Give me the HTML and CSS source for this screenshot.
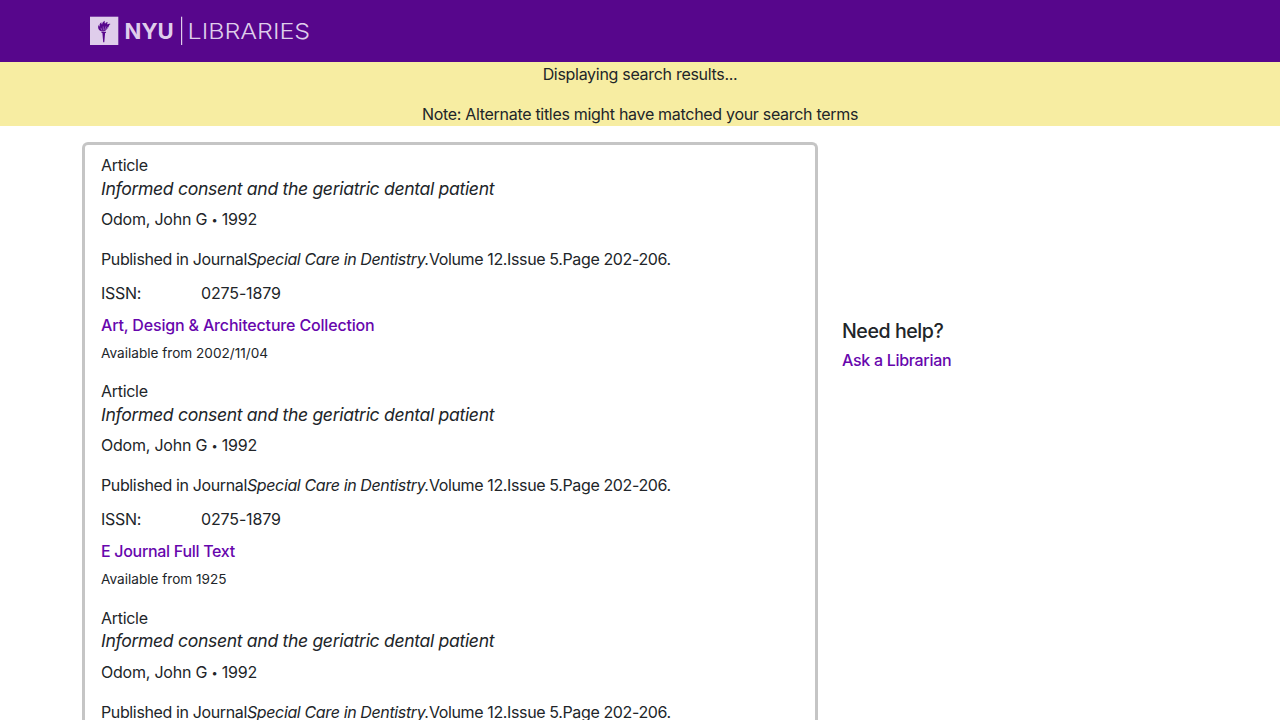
FILE: index.html
```html
<!DOCTYPE html>
<html lang="en">
<head>
<meta charset="utf-8">
<title>NYU Libraries</title>
<link rel="stylesheet" href="styles.css">
</head>
<body>
<header class="header">
  <svg class="logo" width="220" height="30" viewBox="0 0 220 30" role="img" aria-label="NYU Libraries">
    <rect x="0" y="0.7" width="28.3" height="28.3" fill="#dfcdeb"/>
    <path fill="#57068c" d="M11.500 15.800h4.400v1.300h-.8l-.8 9.100h-1.100l-.8-9.100h-.9zM11.200 15.300C8.400 14.200 7.400 11.700 8.700 8.800c.1 1 .4 1.500 1 1.700-.5-2 .2-3.200 1.700-4.200-.1 1.300.2 1.800.7 2.300.1-1.800.9-2.900 2.800-3.800-.5 1.600-.2 2.300.2 3 .5-1 1.400-1.600 2.700-1.700-.7 1-.6 1.600-.4 2.300.9-.6 2-.7 3.100-.3-1.200.5-1.300 1.500-1.900 2.600-1.100 2.200-2.600 3.900-4.900 4.600z"/>
    <path fill="none" stroke="#dfcdeb" stroke-width=".4" d="M12 14.600 10.800 11.800M13.400 14.400l-.2-4M14.700 14.200l1.300-4M16 13.800l2-3"/>
    <text class="logo-bold" x="34.600" y="22.800" textLength="49.200" lengthAdjust="spacingAndGlyphs">NYU</text>
    <rect x="91" y="0.700" width="1.200" height="28.300" fill="#dfcdeb"/>
    <text class="logo-light" x="97.600" y="22.800" textLength="122.500" lengthAdjust="spacingAndGlyphs">LIBRARIES</text>
  </svg>
</header>
<div class="notice">
  <p>Displaying search results...</p>
  <p class="note">Note: Alternate titles might have matched your search terms</p>
</div>
<main class="content">
  <section class="results">
    <article class="result">
      <p class="kind">Article</p>
      <h2 class="title">Informed consent and the geriatric dental patient</h2>
      <p class="author">Odom, John G <span class="dot">•</span> 1992</p>
      <p class="published"><span>Published in Journal</span><i>Special Care in Dentistry.</i><span>Volume 12.Issue 5.Page 202-206.</span></p>
      <dl class="issn"><dt>ISSN:</dt><dd>0275-1879</dd></dl>
      <a class="link link-long" href="#">Art, Design &amp; Architecture Collection</a>
      <p class="available">Available from 2002/11/04</p>
    </article>
    <article class="result">
      <p class="kind">Article</p>
      <h2 class="title">Informed consent and the geriatric dental patient</h2>
      <p class="author">Odom, John G <span class="dot">•</span> 1992</p>
      <p class="published"><span>Published in Journal</span><i>Special Care in Dentistry.</i><span>Volume 12.Issue 5.Page 202-206.</span></p>
      <dl class="issn"><dt>ISSN:</dt><dd>0275-1879</dd></dl>
      <a class="link" href="#">E Journal Full Text</a>
      <p class="available">Available from 1925</p>
    </article>
    <article class="result">
      <p class="kind">Article</p>
      <h2 class="title">Informed consent and the geriatric dental patient</h2>
      <p class="author">Odom, John G <span class="dot">•</span> 1992</p>
      <p class="published"><span>Published in Journal</span><i>Special Care in Dentistry.</i><span>Volume 12.Issue 5.Page 202-206.</span></p>
    </article>
  </section>
  <aside class="help">
    <h3 class="help-title">Need help?</h3>
    <a class="link" href="#">Ask a Librarian</a>
  </aside>
</main>
</body>
</html>
```
FILE: styles.css
```css
* { box-sizing: border-box; }
html, body { height: 100%; overflow: hidden; }
body {
  margin: 0;
  background: #fff;
  color: #212529;
  font: 400 16px/24px Inter, "Liberation Sans", sans-serif;
  letter-spacing: -0.3px;
}
p, h2, h3, dl, dd { margin: 0; }
.header { height: 62px; padding: 16px 90px; background: #57068c; }
.logo { display: block; overflow: visible; }
.logo-bold { font: 700 21.800px Inter, sans-serif; fill: #dfcdeb; letter-spacing: 0; }
.logo-light { font: 300 21.800px Inter, sans-serif; fill: #dfcdeb; letter-spacing: 0; }
.notice { height: 64px; background: #f7eda2; text-align: center; }
.note { margin-top: 16px; }
.content { display: flex; width: 1116px; height: 578px; margin: 16px auto 0; gap: 24px; }
.results {
  width: 736px;
  overflow: hidden;
  padding: 8px 16px;
  border: 3px solid #c5c5c5;
  border-bottom: 0;
  border-radius: 6px 6px 0 0;
}
.result { height: 226.400px; white-space: nowrap; }
.title { font-size: 17.600px; font-weight: 400; font-style: italic; line-height: 22px; letter-spacing: -0.330px; padding-top: 0.600px; margin-bottom: 7.400px; }
.author { letter-spacing: -0.220px; }
.published { margin-top: 16px; letter-spacing: -0.370px; }
.issn { display: flex; margin: 10px 0 8px; letter-spacing: -0.150px; }
.issn dt { width: 100px; letter-spacing: -0.300px; }
.link { display: block; color: #6706ad; font-weight: 500; text-decoration: none; }
.link-long { letter-spacing: -0.170px; }
.available { margin-top: 6px; font-size: 13.600px; line-height: 21px; letter-spacing: 0; }
.help { padding-top: 177px; }
.help-title { font-size: 19.600px; font-weight: 500; line-height: 24px; letter-spacing: -0.450px; margin-bottom: 5px; }
.dot { font-size: 11px; line-height: 1; vertical-align: 1px; }
```
